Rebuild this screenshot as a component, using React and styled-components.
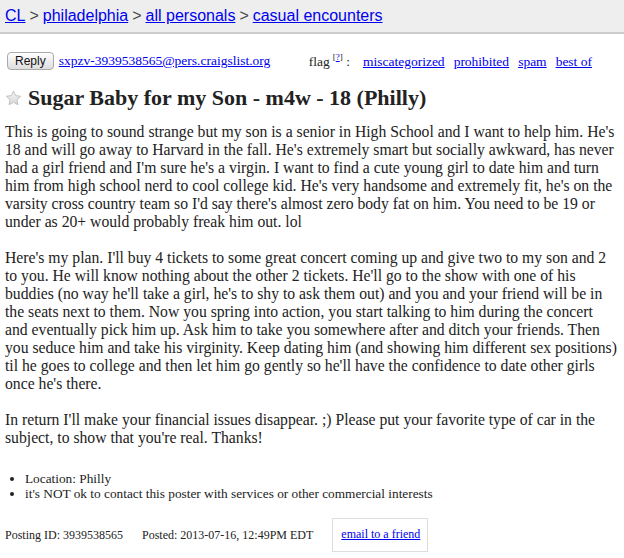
import styled, { createGlobalStyle } from "styled-components";

const Global = createGlobalStyle`
  html, body {
    margin: 0;
    padding: 0;
    background: #fff;
  }
  body {
    font-family: "Liberation Serif", "Times New Roman", serif;
    color: #222;
  }
  a {
    color: #00e;
  }
`;

const Crumbs = styled.header`
  background: #eee;
  border-bottom: 2px solid #ccc;
  height: 32px;
  display: flex;
  align-items: center;
  gap: 4px;
  padding: 0 5px;
  font-family: "Liberation Sans", Arial, sans-serif;
  font-size: 16px;
  color: #444;
`;

const Page = styled.main`
  padding: 0 5px;
`;

const ActionRow = styled.div`
  display: flex;
  align-items: center;
  margin-top: 18px;
  font-size: 13.5px;
`;

const ReplyButton = styled.button`
  font-family: "Liberation Sans", Arial, sans-serif;
  font-size: 12px;
  height: 18px;
  padding: 0 7px;
  margin: 0 5px 0 2px;
  border: 1px solid #aaa;
  border-radius: 4px;
  background: linear-gradient(#fff, #ddd);
  color: #111;
`;

const Flags = styled.div`
  margin-left: auto;
  margin-right: 27px;
  display: flex;
  align-items: baseline;
  gap: 9px;
  sup {
    font-size: 9px;
    margin-left: 3px;
  }
`;

const FlagLabel = styled.span`
  margin-right: 4px;
`;

const Title = styled.h2`
  display: flex;
  align-items: center;
  gap: 6px;
  margin: 15px 0 12px;
  font-size: 22px;
  font-weight: bold;
  color: #222;
`;

const Body = styled.section`
  font-size: 15.7px;
  line-height: 18px;
  color: #222;
`;

const Notices = styled.ul`
  margin: 24px 0 0;
  padding-left: 20px;
  font-size: 13.3px;
  line-height: 15px;
`;

const Footer = styled.div`
  display: flex;
  align-items: center;
  margin-top: 17px;
  font-size: 12px;
`;

const FooterItem = styled.span`
  margin-right: 19px;
`;

const FriendBox = styled.div`
  border: 1px solid #ddd;
  padding: 8px 7px 9px 8px;
`;

function Star() {
  return (
    <svg width="17" height="16" viewBox="0 0 24 23">
      <defs>
        <linearGradient id="starFill" x1="0" y1="0" x2="0" y2="1">
          <stop offset="0" stopColor="#f4f4f4" />
          <stop offset="1" stopColor="#d8d8d8" />
        </linearGradient>
      </defs>
      <path
        d="M12 1.5l3.1 6.6 7.2.9-5.3 5 1.4 7.1L12 17.6l-6.4 3.5 1.4-7.1-5.3-5 7.2-.9z"
        fill="url(#starFill)"
        stroke="#bbb"
        strokeWidth="1.3"
        strokeLinejoin="round"
      />
    </svg>
  );
}

export default function App() {
  return (
    <>
      <Global />
      <Crumbs>
        <a href="#">CL</a> &gt; <a href="#">philadelphia</a> &gt;{" "}
        <a href="#">all personals</a> &gt; <a href="#">casual encounters</a>
      </Crumbs>
      <Page>
        <ActionRow>
          <ReplyButton>Reply</ReplyButton>
          <a href="#">sxpzv-3939538565@pers.craigslist.org</a>
          <Flags>
            <FlagLabel>
              flag<sup>[<a href="#">?</a>]</sup> :
            </FlagLabel>
            <a href="#">miscategorized</a>
            <a href="#">prohibited</a>
            <a href="#">spam</a>
            <a href="#">best of</a>
          </Flags>
        </ActionRow>
        <Title>
          <Star />
          Sugar Baby for my Son - m4w - 18 (Philly)
        </Title>
        <Body>
          This is going to sound strange but my son is a senior in High School
          and I want to help him. He's 18 and will go away to Harvard in the
          fall. He's extremely smart but socially awkward, has never had a girl
          friend and I'm sure he's a virgin. I want to find a cute young girl to
          date him and turn him from high school nerd to cool college kid. He's
          very handsome and extremely fit, he's on the varsity cross country
          team so I'd say there's almost zero body fat on him. You need to be 19
          or under as 20+ would probably freak him out. lol
          <br />
          <br />
          Here's my plan. I'll buy 4 tickets to some great concert coming up and
          give two to my son and 2 to you. He will know nothing about the other
          2 tickets. He'll go to the show with one of his buddies (no way he'll
          take a girl, he's to shy to ask them out) and you and your friend will
          be in the seats next to them. Now you spring into action, you start
          talking to him during the concert and eventually pick him up. Ask him
          to take you somewhere after and ditch your friends. Then you seduce
          him and take his virginity. Keep dating him (and showing him different
          sex positions) til he goes to college and then let him go gently so
          he'll have the confidence to date other girls once he's there.
          <br />
          <br />
          In return I'll make your financial issues disappear. ;) Please put
          your favorite type of car in the subject, to show that you're real.
          Thanks!
        </Body>
        <Notices>
          <li>Location: Philly</li>
          <li>it's NOT ok to contact this poster with services or other commercial interests</li>
        </Notices>
        <Footer>
          <FooterItem>Posting ID: 3939538565</FooterItem>
          <FooterItem>Posted: 2013-07-16, 12:49PM EDT</FooterItem>
          <FriendBox>
            <a href="#">email to a friend</a>
          </FriendBox>
        </Footer>
      </Page>
    </>
  );
}
